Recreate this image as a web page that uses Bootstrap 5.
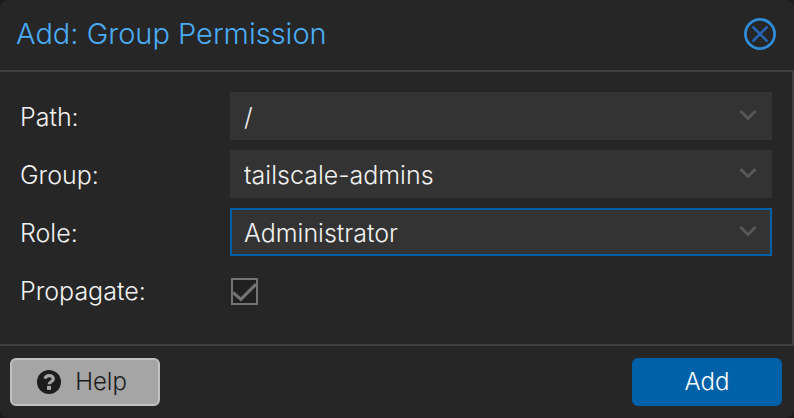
<!DOCTYPE html>
<html lang="en" data-bs-theme="dark">
<head>
<meta charset="utf-8">
<meta name="viewport" content="width=device-width, initial-scale=1">
<title>Add: Group Permission</title>
<link href="https://cdn.jsdelivr.net/npm/bootstrap@5.3.0/dist/css/bootstrap.min.css" rel="stylesheet">
<style>
body { background: #1b1b1b; color: #f2f2f2; font-family: Inter, "Liberation Sans", sans-serif; font-weight: 300; font-size: 25px; line-height: 32px; }
.dialog { background: #262626; border-radius: 8px; }
.dialog-head { height: 72px; padding: 0 18px 2px 16px; border-bottom: 2px solid #404040; }
.dialog-title { color: #4aacf5; font-size: 29px; line-height: 36px; font-weight: 300; }
.close-btn { width: 32px; height: 32px; }
.dialog-body { padding: 20px 20px 30px; border-right: 2px solid #404040; }
.form-rows { gap: 10px; }
.form-line { min-height: 48px; }
.form-line label { width: 210px; flex: none; padding-top: 2px; }
.form-line .form-select {
  height: 48px; padding: 2px 48px 0 12px; border: 2px solid #333; border-radius: 0; color: #f2f2f2;
  font-size: 25px; font-weight: 300; line-height: 32px; background-color: #333;
  background-image: url("data:image/svg+xml,%3Csvg xmlns='http://www.w3.org/2000/svg' viewBox='0 0 18 12'%3E%3Cpath d='M1.5 2 9 9.5 16.5 2' fill='none' stroke='%23575757' stroke-width='3'/%3E%3C/svg%3E");
  background-size: 18px 12px; background-position: right 13px top 15px;
}
.form-line .form-select.active-field { border-color: #0060a8; box-shadow: none; }
.form-line .form-check-input {
  width: 27px; height: 27px; margin: 2px 0 0 1px; border: 2px solid #737373; border-radius: 0; background-color: #202020; box-shadow: none;
}
.form-line .form-check-input:checked {
  border-color: #737373; background-color: #202020; background-size: 23px 23px;
  background-image: url("data:image/svg+xml,%3Csvg xmlns='http://www.w3.org/2000/svg' viewBox='0 0 22 22'%3E%3Cpath d='M0 12 7.5 18.500 22 4' fill='none' stroke='%23737373' stroke-width='3'/%3E%3C/svg%3E");
}
.dialog-foot { padding: 12px 12px 12px 10px; border-top: 2px solid #404040; }
.foot-btn { width: 150px; height: 48px; border-radius: 6px; font-size: 24px; line-height: 32px; font-weight: 300; padding: 0; }
.help-btn, .help-btn:hover { background: #a5a5a5; border: 2px solid #c0c0c0; color: #1c1c1c; gap: 14px; padding-right: 6px; }
.add-btn, .add-btn:hover { background: #0060a8; border: 2px solid #0060a8; color: #fff; }
</style>
<script src="https://cdn.jsdelivr.net/npm/bootstrap@5.3.0/dist/js/bootstrap.bundle.min.js"></script>
</head>
<body>
<form class="dialog">
  <div class="dialog-head d-flex align-items-center justify-content-between">
    <h1 class="dialog-title m-0">Add: Group Permission</h1>
    <button type="button" class="close-btn btn p-0 border-0 d-flex" aria-label="Close">
      <svg width="32" height="32" viewBox="0 0 32 32" fill="none">
        <circle cx="16" cy="16" r="14.6" stroke="#2f8bd6" stroke-width="2.8"/>
        <path d="M8.500 8.500l15 15M23.500 8.500l-15 15" stroke="#2464b4" stroke-width="2.600"/>
      </svg>
    </button>
  </div>
  <div class="dialog-body">
    <div class="form-rows d-flex flex-column">
      <div class="form-line d-flex align-items-center">
        <label for="path">Path:</label>
        <select id="path" class="form-select"><option>/</option></select>
      </div>
      <div class="form-line d-flex align-items-center">
        <label for="group">Group:</label>
        <select id="group" class="form-select"><option>tailscale-admins</option></select>
      </div>
      <div class="form-line d-flex align-items-center">
        <label for="role">Role:</label>
        <select id="role" class="form-select active-field"><option>Administrator</option></select>
      </div>
      <div class="form-line d-flex align-items-center">
        <label for="propagate">Propagate:</label>
        <input id="propagate" type="checkbox" class="form-check-input" checked>
      </div>
    </div>
  </div>
  <div class="dialog-foot d-flex justify-content-between">
    <button type="button" class="btn foot-btn help-btn d-flex align-items-center justify-content-center">
      <svg width="24" height="24" viewBox="0 0 24 24" aria-hidden="true">
        <circle cx="12" cy="12" r="12" fill="#1c1c1c"/>
        <path d="M7.800 8.600C8.700 6.600 10.200 5.700 12.200 5.700c2.300 0 4.100 1.300 4.100 3.300 0 2.800-4.100 2.700-4.100 5.300" fill="none" stroke="#a5a5a5" stroke-width="3.200"/>
        <path d="M10 15.900h4v4h-4z" fill="#a5a5a5"/>
      </svg>
      <span>Help</span>
    </button>
    <button type="submit" class="btn foot-btn add-btn">Add</button>
  </div>
</form>
</body>
</html>
